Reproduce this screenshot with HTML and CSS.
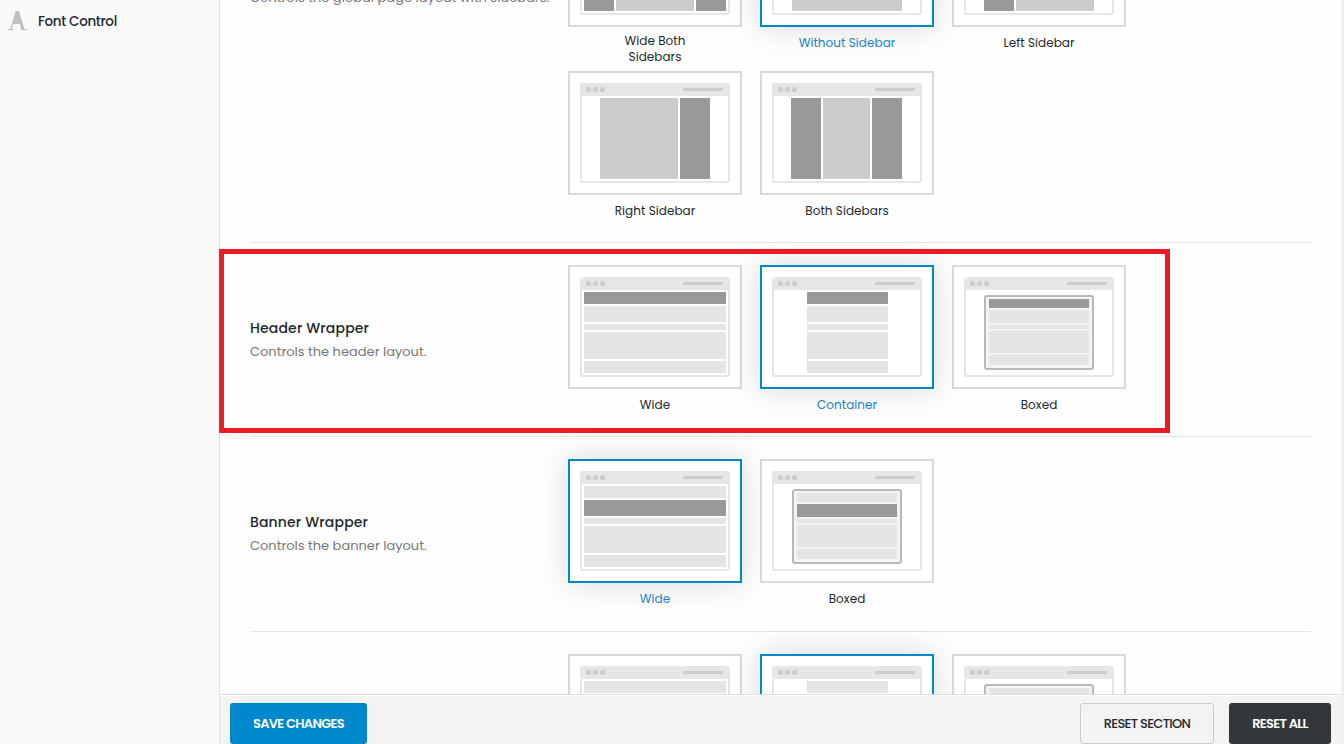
FILE: index.html
```html
<!DOCTYPE html>
<html lang="en">

<head>
  <meta charset="UTF-8">
  <meta name="viewport" content="width=device-width, initial-scale=1.0">
  <title>Theme Options</title>
  <link rel="stylesheet" href="styles.css">
</head>

<body>
  <!-- Shared layout shapes -->
  <svg class="shapes">
    <symbol id="window" viewBox="0 0 150 100">
      <rect width="150" height="100" rx="3" fill="#e6e6e6" />
      <path d="M2 13h146v85H2z" fill="#fff" />
      <circle cx="8.5" cy="6.5" r="2.6" fill="#ccc" />
      <circle cx="15.5" cy="6.5" r="2.6" fill="#ccc" />
      <circle cx="22.5" cy="6.5" r="2.6" fill="#ccc" />
      <rect x="103" y="5" width="40" height="3" rx="1.2" fill="#ccc" />
    </symbol>
    <symbol id="wide" viewBox="0 0 150 100">
      <path d="M4 15h142v12H4zM4 29h142v16H4zM4 47h142v6H4zM4 55h142v27H4zM4 84h142v12H4z" fill="#e4e4e4" />
    </symbol>
    <symbol id="container" viewBox="0 0 150 100">
      <path d="M35 15h81v12H35zM35 29h81v16H35zM35 47h81v6H35zM35 55h81v27H35zM35 84h81v12H35z" fill="#e4e4e4" />
    </symbol>
    <symbol id="boxed" viewBox="0 0 150 100">
      <rect x="21" y="19" width="108" height="73" rx="2" fill="#f3f3f3" stroke="#b8b8b8" stroke-width="2" />
      <path d="M25 22h100v9H25zM25 33h100v13H25zM25 48h100v4H25zM25 54h100v22H25zM25 78h100v10H25z" fill="#e4e4e4" />
    </symbol>
  </svg>

  <div class="page">
    <aside class="sidebar">
      <div class="sidebar__item">
        <svg class="sidebar__icon" viewBox="0 0 19 19" fill="#bfc1c1">
          <path d="M7.8 0h3.1l5.5 17.9H19V19h-6.8v-1.1h1.2L11.9 13H5.3l-1.7 4.9h1.8V19H0v-1.1h2.2z" />
        </svg>
        <span class="sidebar__label">Font Control</span>
      </div>
    </aside>

    <main class="options">
      <section class="field field--first">
        <div class="field__info">
          <p class="field__desc field__desc--long">Controls the global page layout with sidebars.</p>
        </div>
        <div class="field__choices">
          <div class="choice">
            <div class="choice__box">
              <svg class="choice__image" viewBox="0 0 150 100">
                <use href="#window" />
                <path d="M4 15h30v81H4zM116 15h30v81h-30z" fill="#999" />
                <path d="M36 15h78v81H36z" fill="#ccc" />
              </svg>
            </div>
            <p class="choice__label choice__label--lines">Wide Both<br>Sidebars</p>
          </div>
          <div class="choice is-active">
            <div class="choice__box">
              <svg class="choice__image" viewBox="0 0 150 100">
                <use href="#window" />
                <path d="M20 15h110v81H20z" fill="#ccc" />
              </svg>
            </div>
            <p class="choice__label">Without Sidebar</p>
          </div>
          <div class="choice">
            <div class="choice__box">
              <svg class="choice__image" viewBox="0 0 150 100">
                <use href="#window" />
                <path d="M20 15h30v81H20z" fill="#999" />
                <path d="M52 15h78v81H52z" fill="#ccc" />
              </svg>
            </div>
            <p class="choice__label">Left Sidebar</p>
          </div>
          <div class="choice">
            <div class="choice__box">
              <svg class="choice__image" viewBox="0 0 150 100">
                <use href="#window" />
                <path d="M20 15h78v81H20z" fill="#ccc" />
                <path d="M100 15h30v81h-30z" fill="#999" />
              </svg>
            </div>
            <p class="choice__label">Right Sidebar</p>
          </div>
          <div class="choice">
            <div class="choice__box">
              <svg class="choice__image" viewBox="0 0 150 100">
                <use href="#window" />
                <path d="M19 15h30v81H19zM100 15h30v81h-30z" fill="#999" />
                <path d="M51 15h47v81H51z" fill="#ccc" />
              </svg>
            </div>
            <p class="choice__label">Both Sidebars</p>
          </div>
        </div>
      </section>

      <section class="field field--header">
        <div class="field__info">
          <h2 class="field__title">Header Wrapper</h2>
          <p class="field__desc">Controls the header layout.</p>
        </div>
        <div class="field__choices">
          <div class="choice">
            <div class="choice__box">
              <svg class="choice__image" viewBox="0 0 150 100">
                <use href="#window" />
                <use href="#wide" />
                <path d="M4 15h142v12H4z" fill="#999" />
              </svg>
            </div>
            <p class="choice__label">Wide</p>
          </div>
          <div class="choice is-active">
            <div class="choice__box">
              <svg class="choice__image" viewBox="0 0 150 100">
                <use href="#window" />
                <use href="#container" />
                <path d="M35 15h81v12H35z" fill="#999" />
              </svg>
            </div>
            <p class="choice__label">Container</p>
          </div>
          <div class="choice">
            <div class="choice__box">
              <svg class="choice__image" viewBox="0 0 150 100">
                <use href="#window" />
                <use href="#boxed" />
                <path d="M25 22h100v9H25z" fill="#999" />
              </svg>
            </div>
            <p class="choice__label">Boxed</p>
          </div>
        </div>
        <div class="highlight"></div>
      </section>

      <section class="field field--banner">
        <div class="field__info">
          <h2 class="field__title">Banner Wrapper</h2>
          <p class="field__desc">Controls the banner layout.</p>
        </div>
        <div class="field__choices">
          <div class="choice is-active">
            <div class="choice__box">
              <svg class="choice__image" viewBox="0 0 150 100">
                <use href="#window" />
                <use href="#wide" />
                <path d="M4 29h142v16H4z" fill="#999" />
              </svg>
            </div>
            <p class="choice__label">Wide</p>
          </div>
          <div class="choice">
            <div class="choice__box">
              <svg class="choice__image" viewBox="0 0 150 100">
                <use href="#window" />
                <use href="#boxed" />
                <path d="M25 33h100v13H25z" fill="#999" />
              </svg>
            </div>
            <p class="choice__label">Boxed</p>
          </div>
        </div>
      </section>

      <section class="field">
        <div class="field__info"></div>
        <div class="field__choices">
          <div class="choice">
            <div class="choice__box">
              <svg class="choice__image" viewBox="0 0 150 100">
                <use href="#window" />
                <use href="#wide" />
              </svg>
            </div>
          </div>
          <div class="choice is-active">
            <div class="choice__box">
              <svg class="choice__image" viewBox="0 0 150 100">
                <use href="#window" />
                <use href="#container" />
              </svg>
            </div>
          </div>
          <div class="choice">
            <div class="choice__box">
              <svg class="choice__image" viewBox="0 0 150 100">
                <use href="#window" />
                <use href="#boxed" />
              </svg>
            </div>
          </div>
        </div>
      </section>
    </main>
    <div class="edge"></div>
  </div>

  <footer class="actions">
    <button class="button button--save">SAVE CHANGES</button>
    <button class="button button--section">RESET SECTION</button>
    <button class="button button--all">RESET ALL</button>
  </footer>
</body>

</html>
```

FILE: styles.css
```css
html {
  box-sizing: border-box;
}

*,
*::before,
*::after {
  box-sizing: inherit;
}

body {
  margin: 0;
  background-color: #fefefe;
  color: #23282d;
  font-family: Poppins, Inter, "Open Sans", sans-serif;
  overflow: hidden;
}

h2,
p {
  margin: 0;
}

.shapes {
  display: none;
}

.page {
  display: flex;
  height: 744px;
  overflow: hidden;
}

/* Sidebar */

.sidebar {
  flex: none;
  width: 220px;
  background-color: #fafafa;
  border-right: 1px solid #e2e2e2;
}

.sidebar__item {
  display: flex;
  align-items: center;
  gap: 11px;
  height: 41px;
  padding-left: 8px;
}

.sidebar__icon {
  width: 19px;
  height: 19px;
}

.sidebar__label {
  padding-top: 2px;
  font-size: 13.5px;
  font-weight: 500;
  letter-spacing: -0.35px;
  white-space: nowrap;
}

/* Option rows */

.options {
  flex: 1;
  margin-top: -120px;
  padding: 0 30px;
}

.field {
  display: flex;
  align-items: center;
  position: relative;
  height: 194px;
  border-top: 1px solid #e5e5e5;
}

.field--first {
  align-items: flex-start;
  height: 362px;
}

.field--first .field__info {
  padding-top: 106px;
}

.field--banner {
  height: 195px;
}

.field__info {
  flex: none;
  width: 318px;
}

.field__title {
  margin-top: -1px;
  margin-bottom: 1px;
  font-size: 14px;
  font-weight: 500;
  line-height: 24px;
  letter-spacing: 0.15px;
}

.field__desc {
  color: #777;
  font-size: 13px;
  line-height: 22px;
  white-space: nowrap;
}

.field__desc--long {
  letter-spacing: 0.02px;
}

.field__choices {
  align-self: flex-start;
  display: grid;
  grid-template-columns: repeat(3, 174px);
  grid-auto-rows: 168px;
  column-gap: 18px;
  padding-top: 22px;
}

.choice__box {
  height: 124px;
  padding: 10px;
  background-color: #fff;
  border: 2px solid #d9d9d9;
}

.choice__image {
  display: block;
  width: 150px;
  height: 100px;
}

.choice__label {
  margin-top: 8px;
  font-size: 12px;
  line-height: 16px;
  letter-spacing: 0.05px;
  text-align: center;
}

.choice__label--lines {
  margin-top: 6px;
}

.is-active .choice__box {
  border-color: #08c;
  box-shadow: 0 0 30px rgba(0, 0, 0, 0.15);
}

.is-active .choice__label {
  color: #1a82c8;
}

.highlight {
  position: absolute;
  top: 6px;
  left: -31px;
  width: 951px;
  height: 184px;
  border: 5px solid #ed1c24;
}

.edge {
  flex: none;
  width: 3px;
  background-color: #efefef;
}

/* Bottom bar */

.actions {
  position: fixed;
  right: 3px;
  bottom: 0;
  left: 220px;
  display: flex;
  height: 50px;
  padding: 8px 10px 0;
  background-color: #f3f3f3;
  border-top: 1px solid #ddd;
  box-shadow: inset 0 1px 0 #fff;
}

.button {
  height: 41px;
  padding: 0;
  border: 0;
  border-radius: 3px;
  font-family: inherit;
  font-size: 13px;
  font-weight: 600;
  letter-spacing: -0.7px;
}

.button--save {
  width: 137px;
  background-color: #08c;
  color: #fff;
}

.button--section {
  width: 134px;
  margin-left: auto;
  background-color: transparent;
  border: 1px solid #ccc;
  color: #23282d;
  font-weight: 500;
}

.button--all {
  width: 102px;
  margin-left: 15px;
  background-color: #32373c;
  color: #fff;
}
```
